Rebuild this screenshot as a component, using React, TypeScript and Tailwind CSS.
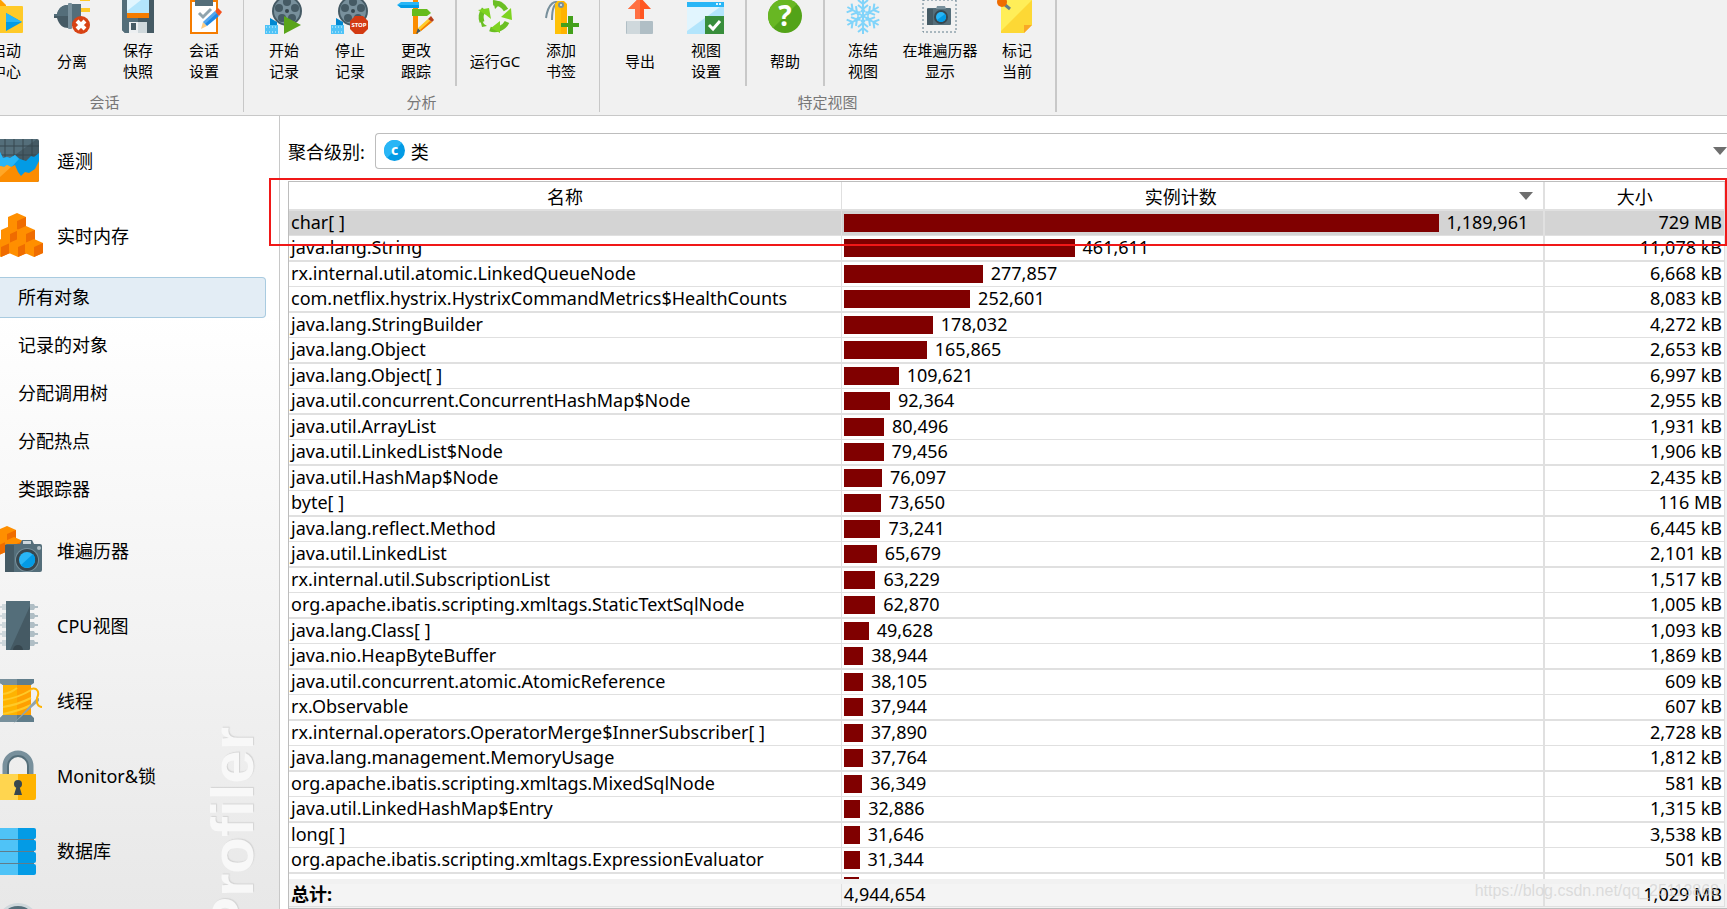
import type { ReactNode } from "react";

type ToolItem = { lines: string[]; icon: ReactNode; wide?: boolean };

/* ================= TOOLBAR ICONS ================= */

const Reel = () => (
  <>
    <circle cx="36" cy="11" r="15" fill="#455a64" />
    <circle cx="36" cy="11" r="13" fill="#78909c" />
    <g fill="#455a64">
      <circle cx="36" cy="2" r="4" />
      <circle cx="28" cy="8" r="4" />
      <circle cx="44" cy="8" r="4" />
      <circle cx="31" cy="18" r="4" />
      <circle cx="41" cy="18" r="4" />
    </g>
    <circle cx="36" cy="11" r="2" fill="#37474f" />
    <path d="M19 18l7 4v5h-7z" fill="#0288d1" />
    <path d="M14 25h13v9H14z" fill="#4fc3f7" />
    <path d="M15 27h11M15 32h11" stroke="#e1f5fe" strokeDasharray="1 2" />
  </>
);

const Pencil = ({ color }: { color: string }) => (
  <>
    <path d="M30 29l2-7 4 4z" fill="#ffcc80" />
    <path d="M32 22L44 11l4 5-12 10z" fill={color} />
    <path d="M32 22L44 11l2 2-12 11z" fill="#fff" opacity=".25" />
    <path d="M44 11l3-3 4 4-3 4z" fill="#f4511e" />
  </>
);

const icons = {
  start: (
    <>
      <path d="M10 0h18l5 5v6H10z" fill="#ffa000" />
      <rect x="8" y="6" width="42" height="27" rx="1" fill="#ffca28" />
      <path d="M33 13v18l16-9z" fill="#039be5" />
      <path d="M33 13v9h16z" fill="#29b6f6" />
    </>
  ),
  detach: (
    <>
      <path d="M41 0h10v1H41zM41 8h10v4H41z" fill="#ffca28" />
      <path d="M15 14h3c2-7 6-9 11-9v23c-5 0-9-3-11-10h-3z" fill="#455a64" />
      <path d="M15 14h3c2-7 6-9 11-9v11H15z" fill="#546e7a" />
      <rect x="33" y="4" width="9" height="22" fill="#546e7a" />
      <rect x="29" y="3" width="4" height="26" rx="1" fill="#78909c" />
      <circle cx="42" cy="25" r="9" fill="#d84315" />
      <path d="M38 21l8 8M46 21l-8 8" stroke="#fff" strokeWidth="4" />
    </>
  ),
  save: (
    <>
      <path d="M17 0h32v33H20l-3-3z" fill="#455a64" />
      <path d="M17 0h16v33H20l-3-3z" fill="#546e7a" />
      <path d="M22 0h22v13H22z" fill="#b3e5fc" />
      <path d="M22 0h14L22 11z" fill="#e1f5fe" />
      <path d="M22 13h22v5H22z" fill="#f57c00" />
      <path d="M24 22h18v11H24z" fill="#cfd8dc" />
      <path d="M24 22h9v11h-9z" fill="#eceff1" />
      <path d="M26 23h5v7h-5z" fill="#455a64" />
    </>
  ),
  session: (
    <>
      <path d="M20 1h26v32H20z" fill="#fff" stroke="#f57c00" strokeWidth="2" />
      <path d="M24 0h18v6H24z" fill="#546e7a" />
      <path d="M28 13l4 4 8-8" fill="none" stroke="#90a4ae" strokeWidth="3" />
      <Pencil color="#1e88e5" />
    </>
  ),
  record: (
    <>
      <Reel />
      <path d="M33 16v18l17-9z" fill="#5aa51a" />
    </>
  ),
  stop: (
    <>
      <Reel />
      <path d="M38 16h8l5 5v8l-5 5h-8l-5-5v-8z" fill="#d33a12" />
      <text x="42" y="27" textAnchor="middle" fontSize="6" fontWeight="700" fill="#fff">
        STOP
      </text>
    </>
  ),
  signpost: (
    <>
      <path d="M30 0h5v34h-5z" fill="#fb8c00" />
      <path d="M18 2h18v6H18l-4-3z" fill="#29b6f6" />
      <path d="M15 5h21v3H18z" fill="#039be5" />
      <path d="M29 9h15l4 4-4 3H29z" fill="#66bb1e" />
      <path d="M33 34l2-6 3 3z" fill="#455a64" />
      <path d="M35 28l10-9 4 3-11 9z" fill="#ffca28" />
      <path d="M38 31l11-9-2-1-10 9z" fill="#f57c00" />
      <path d="M45 19l3-3 3 4-2 2z" fill="#b8401c" />
    </>
  ),
  gc: (
    <>
      <g fill="none" stroke="#6abf23" strokeWidth="5">
        <path d="M20 22a14 14 0 0 1 2-13" />
        <path d="M31 3a14 14 0 0 1 13 7" />
        <path d="M45 22a14 14 0 0 1-17 7" />
      </g>
      <path d="M16 10l11-2 2 11-5-4zM49 8l1 12-11-3zM38 21v12l-9-5z" fill="#7ed321" />
      <path d="M31 0l9 2-7 7zM17 15l5 9 3 2-5 1z" fill="#6abf23" />
    </>
  ),
  bookmark: (
    <>
      <g fill="none" stroke="#78909c" strokeWidth="2">
        <path d="M33 5C27-2 20 4 18 18" />
        <path d="M33 4c-7-4-9 6-9 16" />
      </g>
      <path d="M27 4l3-3h6l3 3v30H27z" fill="#ffb300" />
      <path d="M27 4l3-3h3v33h-6z" fill="#ffc107" />
      <circle cx="33" cy="5" r="3" fill="#78909c" />
      <circle cx="33" cy="5" r="1" fill="#eceff1" />
      <path d="M40 16h5v7h6v4h-6v7h-5v-7h-7v-4h7z" fill="#43a01b" />
    </>
  ),
  exportIcon: (
    <>
      <path d="M33-3l11 12h-7v10h-9V9h-7z" fill="#ff5722" />
      <path d="M33-3v22h-5V9h-7z" fill="#ff7043" />
      <rect x="19" y="21" width="27" height="13" rx="1" fill="#b0bec5" />
      <path d="M20 21h13v13H20z" fill="#cfd8dc" />
    </>
  ),
  viewSettings: (
    <>
      <path d="M14 2h37v32H14z" fill="#b3e5fc" />
      <path d="M14 7h33L14 31z" fill="#e1f5fe" />
      <path d="M14 2h37v5H14z" fill="#29b6f6" />
      <path d="M43 3h2v2h-2zM46 3h2v2h-2z" fill="#e1f5fe" />
      <path d="M32 16h19v18H32z" fill="#388e3c" />
      <path d="M36 25l4 4 7-8" fill="none" stroke="#fff" strokeWidth="3" />
    </>
  ),
  help: (
    <>
      <circle cx="33" cy="16" r="17" fill="#53a318" />
      <path d="M16 16A17 17 0 0 1 45 4L21 28A17 17 0 0 1 16 16z" fill="#68b723" />
      <text x="33" y="26" textAnchor="middle" fontSize="28" fontWeight="700" fill="#fff">
        ?
      </text>
    </>
  ),
  freeze: (
    <g fill="none" stroke="#81d4fa" strokeWidth="2">
      {[0, 60, 120, 180, 240, 300].map((a) => (
        <g key={a} transform={`rotate(${a} 33 16)`}>
          <path d="M33 16V-2M33 4l-5-4M33 4l5-4M33 9l-5-4M33 9l5-4M31 12l2-3 2 3" />
        </g>
      ))}
    </g>
  ),
  heapShow: (
    <>
      <path d="M27-1v33h33V-1M27 0h33" fill="none" stroke="#607d8b" strokeDasharray="2 2" />
      <rect x="31" y="8" width="24" height="17" rx="1" fill="#546e7a" />
      <path d="M31 9h6v16h-6z" fill="#455a64" />
      <path d="M40 9l1-3h8l1 3z" fill="#78909c" />
      <circle cx="45" cy="17" r="7" fill="#37474f" />
      <circle cx="45" cy="17" r="5" fill="#29b6f6" />
      <path d="M41 20a5 5 0 0 0 8-6z" fill="#039be5" />
    </>
  ),
  mark: (
    <>
      <path d="M17 0h31v25l-8 8H17z" fill="#fdd835" />
      <path d="M17 0h31L17 31z" fill="#ffee58" />
      <path d="M40 33v-8h8z" fill="#f9a825" />
      <path d="M20 4l6 5" stroke="#607d8b" strokeWidth="3" />
      <circle cx="18" cy="2" r="5" fill="#ef6c00" />
    </>
  ),
};

/* ================= SIDEBAR ICONS ================= */

const Cube = ({ x, y }: { x: number; y: number }) => (
  <g transform={`translate(${x} ${y})`}>
    <path d="M0 0l9 4v10l-9 4-9-4V4z" fill="#ff8f00" />
    <path d="M0 8l9-4v10l-9 4z" fill="#ef6c00" />
  </g>
);

const sideIcons = {
  telemetry: (
    <>
      <rect x="-4" y="16" width="43" height="43" rx="2" fill="#455a64" />
      <path d="M-4 16h41L4 40h-8z" fill="#546e7a" />
      <path d="M5 16v28M14 16v28M23 16v28M32 16v28M0 23h39M0 32h39" stroke="#37474f" />
      <path d="M0 29l3 6 4-1 3 1 5-3 5 4 6 2 5-5 3 1 5-4v26H0z" fill="#039be5" />
      <path d="M0 29l3 6 4-1 3 1 5-3 4 4L6 50H0z" fill="#29b6f6" />
      <path d="M0 43l4 1 3-2 4 2 4-2 3 7 3 4 4-4 4 1 6-4 4-8v19q0 2-2 2H0z" fill="#fb8c00" />
      <path d="M0 43l4 1 3-2 4 2L0 54z" fill="#ffa726" />
    </>
  ),
  memory: (
    <>
      <Cube x={17} y={15} />
      <Cube x={10} y={28} />
      <Cube x={26} y={28} />
      <Cube x={1} y={41} />
      <Cube x={18} y={41} />
      <Cube x={34} y={41} />
    </>
  ),
  heap: (
    <>
      <Cube x={7} y={13} />
      <Cube x={-1} y={24} />
      <Cube x={14} y={24} />
      <path d="M20 31l2-4h10l2 4z" fill="#546e7a" />
      <path d="M23 28h8v3h-8z" fill="#cfd8dc" />
      <rect x="5" y="31" width="37" height="28" rx="2" fill="#546e7a" />
      <path d="M5 32h9v27H5z" fill="#455a64" />
      <circle cx="39" cy="35" r="2" fill="#b0bec5" />
      <circle cx="27" cy="47" r="12" fill="#78909c" />
      <circle cx="27" cy="47" r="11" fill="#37474f" />
      <circle cx="27" cy="47" r="8" fill="#29b6f6" />
      <path d="M21 52L33 41a8 8 0 0 1-12 11z" fill="#039be5" />
    </>
  ),
  cpu: (
    <>
      {[19, 28, 37, 46, 55].map((y) => (
        <g key={y}>
          <path d={`M0 ${y - 1}h2v-2h5v6H2v-2H0z`} fill="#cfd8dc" />
          <path d={`M29 ${y - 3}h5l1 2h3v2h-3l-1 2h-5z`} fill="#b0bec5" />
        </g>
      ))}
      <rect x="6" y="13" width="24" height="49" rx="1" fill="#455a64" />
      <path d="M6 13h24v5L10 62H6z" fill="#546e7a" />
      <path d="M13 62a5 5 0 0 1 10 0z" fill="#37474f" />
    </>
  ),
  thread: (
    <>
      <path d="M3 22h28v31H3z" fill="#ffa000" />
      <path d="M3 22h14v31H3z" fill="#ffb300" />
      <path d="M3 31q8-1 14-6M3 37q15-2 28-10M3 44q14-2 28-9M3 51q16-3 28-9" fill="none" stroke="#ffca28" strokeWidth="2" />
      <path d="M0 16h34v4l-3 2H3l-3-2zM0 55l3-3h28l3 3v4H0z" fill="#607d8b" />
      <path d="M0 16h17v6H3l-3-2zM0 55l3-3h14v7H0z" fill="#78909c" />
      <path d="M13 61L36 36l3-1v3z" fill="#90a4ae" />
      <path d="M31 26c6-2 9 3 6 9-1 5 1 9 5 9" fill="none" stroke="#ffb300" strokeWidth="2" />
    </>
  ),
  lock: (
    <>
      <path d="M5 37V28a13 13 0 0 1 26 0v9" fill="none" stroke="#78909c" strokeWidth="5" />
      <path d="M8 37V28a10 10 0 0 1 20 0v9" fill="none" stroke="#546e7a" strokeWidth="2" />
      <path d="M0 36h36v24q0 2-2 2H0z" fill="#ffb300" />
      <path d="M0 36h18v26H0z" fill="#ffd54f" />
      <circle cx="18" cy="46" r="4" fill="#37474f" />
      <path d="M17 47h2l3 10h-8z" fill="#37474f" />
    </>
  ),
  database: (
    <>
      <path d="M0 24h34v30H0z" fill="#607d8b" />
      {[15, 27, 39, 51].map((y) => (
        <g key={y}>
          <rect x="-4" y={y} width="40" height="11" rx="2" fill="#039be5" />
          <path d={`M0 ${y}h18v11H0z`} fill="#4fc3f7" />
        </g>
      ))}
    </>
  ),
  gauge: (
    <>
      <circle cx="18" cy="36" r="21" fill="#cfd8dc" />
      <circle cx="18" cy="36" r="18" fill="#546e7a" />
    </>
  ),
};

/* ================= DATA ================= */

const toolGroups: { title: string; sections: ToolItem[][] }[] = [
  {
    title: "会话",
    sections: [
      [
        { lines: ["启动", "中心"], icon: icons.start },
        { lines: ["分离"], icon: icons.detach },
        { lines: ["保存", "快照"], icon: icons.save },
        { lines: ["会话", "设置"], icon: icons.session },
      ],
    ],
  },
  {
    title: "分析",
    sections: [
      [
        { lines: ["开始", "记录"], icon: icons.record },
        { lines: ["停止", "记录"], icon: icons.stop },
        { lines: ["更改", "跟踪"], icon: icons.signpost },
      ],
      [
        { lines: ["运行GC"], icon: icons.gc },
        { lines: ["添加", "书签"], icon: icons.bookmark },
      ],
    ],
  },
  {
    title: "特定视图",
    sections: [
      [
        { lines: ["导出"], icon: icons.exportIcon },
        { lines: ["视图", "设置"], icon: icons.viewSettings },
      ],
      [{ lines: ["帮助"], icon: icons.help }],
      [
        { lines: ["冻结", "视图"], icon: icons.freeze },
        { lines: ["在堆遍历器", "显示"], icon: icons.heapShow, wide: true },
        { lines: ["标记", "当前"], icon: icons.mark },
      ],
    ],
  },
];

const memoryViews = ["所有对象", "记录的对象", "分配调用树", "分配热点", "类跟踪器"];

const rows: [string, number, string][] = [
  ["char[ ]", 1189961, "729 MB"],
  ["java.lang.String", 461611, "11,078 kB"],
  ["rx.internal.util.atomic.LinkedQueueNode", 277857, "6,668 kB"],
  ["com.netflix.hystrix.HystrixCommandMetrics$HealthCounts", 252601, "8,083 kB"],
  ["java.lang.StringBuilder", 178032, "4,272 kB"],
  ["java.lang.Object", 165865, "2,653 kB"],
  ["java.lang.Object[ ]", 109621, "6,997 kB"],
  ["java.util.concurrent.ConcurrentHashMap$Node", 92364, "2,955 kB"],
  ["java.util.ArrayList", 80496, "1,931 kB"],
  ["java.util.LinkedList$Node", 79456, "1,906 kB"],
  ["java.util.HashMap$Node", 76097, "2,435 kB"],
  ["byte[ ]", 73650, "116 MB"],
  ["java.lang.reflect.Method", 73241, "6,445 kB"],
  ["java.util.LinkedList", 65679, "2,101 kB"],
  ["rx.internal.util.SubscriptionList", 63229, "1,517 kB"],
  ["org.apache.ibatis.scripting.xmltags.StaticTextSqlNode", 62870, "1,005 kB"],
  ["java.lang.Class[ ]", 49628, "1,093 kB"],
  ["java.nio.HeapByteBuffer", 38944, "1,869 kB"],
  ["java.util.concurrent.atomic.AtomicReference", 38105, "609 kB"],
  ["rx.Observable", 37944, "607 kB"],
  ["rx.internal.operators.OperatorMerge$InnerSubscriber[ ]", 37890, "2,728 kB"],
  ["java.lang.management.MemoryUsage", 37764, "1,812 kB"],
  ["org.apache.ibatis.scripting.xmltags.MixedSqlNode", 36349, "581 kB"],
  ["java.util.LinkedHashMap$Entry", 32886, "1,315 kB"],
  ["long[ ]", 31646, "3,538 kB"],
  ["org.apache.ibatis.scripting.xmltags.ExpressionEvaluator", 31344, "501 kB"],
];

const maxCount = rows[0][1];
const barWidth = (count: number) => `${(count / maxCount) * 85}%`;

/* ================= PARTS ================= */

function ToolButton({ lines, icon, wide }: ToolItem) {
  return (
    <button className={`flex flex-col items-center ${wide ? "w-[88px]" : "w-[66px]"}`}>
      <svg viewBox={wide ? "0 0 88 36" : "0 0 66 36"} className="h-9 w-full" aria-hidden="true">
        {icon}
      </svg>
      <span className="mt-1 flex h-[42px] flex-col justify-center text-[15px] leading-[21px] whitespace-nowrap">
        {lines.map((line) => (
          <span key={line}>{line}</span>
        ))}
      </span>
    </button>
  );
}

function Toolbar() {
  return (
    <header className="flex shrink-0 overflow-hidden border-b border-[#c8c8c8] bg-[#f1f1f1]">
      {toolGroups.map((group, g) => (
        <section
          key={group.title}
          className={`mb-[3px] flex shrink-0 flex-col border-[#c8c8c8] ${g === 0 ? "-ml-[34px]" : ""} ${
            g === 2 ? "border-r-2" : "border-r"
          }`}
        >
          <div className="flex h-[86px]">
            {group.sections.map((section, s) => (
              <div
                key={s}
                className={`flex border-[#c8c8c8] ${s === 0 ? "pr-1.5 pl-[7px]" : "pr-[5px] pl-[5px]"} ${
                  s < group.sections.length - 1 ? "border-r-2" : ""
                }`}
              >
                {section.map((item) => (
                  <ToolButton key={item.lines.join("")} {...item} />
                ))}
              </div>
            ))}
          </div>
          <h2 className="mt-1.5 text-center text-[15px] leading-5 text-[#777]">{group.title}</h2>
        </section>
      ))}
    </header>
  );
}

function SideItem({ icon, label }: { icon: ReactNode; label: string }) {
  return (
    <li>
      <a href="#" className="flex h-[75px] items-center gap-[13px]">
        <svg viewBox="0 0 44 75" className="h-[75px] w-11 shrink-0" aria-hidden="true">
          {icon}
        </svg>
        {label}
      </a>
    </li>
  );
}

function Sidebar() {
  return (
    <aside className="relative w-[280px] shrink-0 overflow-hidden border-r border-[#c8c8c8] bg-linear-to-b from-white from-25% to-[#e8e8e8] pt-[7px]">
      <div className="absolute top-[611px] right-4 rotate-180 font-['Liberation_Sans',sans-serif] text-[60px] leading-[60px] font-bold text-[#f8f8f8] [text-shadow:1px_1px_1px_#d4d4d4] [writing-mode:vertical-rl]">
        JProfiler
      </div>
      <nav className="relative text-lg">
        <ul>
          <SideItem icon={sideIcons.telemetry} label="遥测" />
          <SideItem icon={sideIcons.memory} label="实时内存" />
          {memoryViews.map((view, i) => (
            <li key={view} className="flex h-12 items-center pr-[13px]">
              <a
                href="#"
                className={`h-[41px] w-full rounded-r-sm border border-l-0 pl-[18px] leading-[39px] ${
                  i === 0 ? "border-[#a9cbe0] bg-[#e3edf5]" : "border-transparent"
                }`}
              >
                {view}
              </a>
            </li>
          ))}
          <SideItem icon={sideIcons.heap} label="堆遍历器" />
          <SideItem icon={sideIcons.cpu} label="CPU视图" />
          <SideItem icon={sideIcons.thread} label="线程" />
          <SideItem icon={sideIcons.lock} label="Monitor&锁" />
          <SideItem icon={sideIcons.database} label="数据库" />
          <SideItem icon={sideIcons.gauge} label="" />
        </ul>
      </nav>
    </aside>
  );
}

function Columns() {
  return (
    <colgroup>
      <col className="w-[38.5%]" />
      <col className="w-[49%]" />
      <col />
    </colgroup>
  );
}

function ObjectTable() {
  return (
    <div className="relative flex min-h-0 flex-1 flex-col border-t border-l border-[#bdbdbd] bg-[#f1f1f1] pr-0.5">
      <div className="min-h-0 flex-1 overflow-hidden">
        <table className="w-full table-fixed border-separate border-spacing-0 bg-white">
          <Columns />
          <thead>
            <tr className="text-lg leading-[23px]">
              <th className="border-r border-b-2 border-[#e0e0e0] p-0 pt-1 font-normal">名称</th>
              <th className="border-r-2 border-b-2 border-[#e0e0e0] p-0 pt-1 font-normal">
                <span className="flex items-center pr-2.5">
                  <span className="flex-1">实例计数</span>
                  <svg viewBox="0 0 14 8" className="mb-1 h-2 w-3.5" aria-hidden="true">
                    <path d="M0 0h14L7 8z" fill="#6e6e6e" />
                  </svg>
                </span>
              </th>
              <th className="border-r border-b-2 border-[#e0e0e0] p-0 pt-1 font-normal">大小</th>
            </tr>
          </thead>
          <tbody className="text-lg leading-[22px]">
            {rows.map(([name, count, size], i) => (
              <tr
                key={name}
                className={`*:border-[#e0e0e0] *:p-0 ${i % 2 ? "*:border-b-2" : "*:border-b"} ${
                  i === 0 ? "bg-[#d4d4d4]" : ""
                }`}
              >
                <td className="border-r">
                  <div className="h-6 pl-0.5 whitespace-nowrap">{name}</div>
                </td>
                <td className="border-r-2">
                  <div className="flex h-6 items-center gap-2 pl-0.5">
                    <div className="h-[18px] bg-[#800000]" style={{ width: barWidth(count) }} />
                    <span className="h-6">{count.toLocaleString("en-US")}</span>
                  </div>
                </td>
                <td className="border-r">
                  <div className="h-6 pr-0.5 text-right whitespace-nowrap">{size}</div>
                </td>
              </tr>
            ))}
            <tr className="*:border-[#e0e0e0] *:p-0">
              <td className="border-r" />
              <td className="border-r-2">
                <div className="flex h-6 items-center pl-0.5">
                  <div className="h-[18px] bg-[#800000]" style={{ width: barWidth(31000) }} />
                </div>
              </td>
              <td className="border-r" />
            </tr>
          </tbody>
        </table>
      </div>
      <table className="mt-[5px] mb-px w-full table-fixed border-separate border-spacing-0 border-b border-[#e0e0e0] bg-[#f4f4f4] text-lg leading-5">
        <Columns />
        <tbody>
          <tr className="*:border-[#e0e0e0] *:p-0">
            <th className="border-r text-left font-bold">
              <div className="h-[22px] pl-0.5">总计:</div>
            </th>
            <td className="border-r-2">
              <div className="h-[22px] pl-0.5">4,944,654</div>
            </td>
            <td className="border-r">
              <div className="h-[22px] pr-0.5 text-right">1,029 MB</div>
            </td>
          </tr>
        </tbody>
      </table>
      {/* highlight frame around the header and the first row */}
      <div className="pointer-events-none absolute -top-1 right-0 -left-5 h-[68px] border-2 border-[#f01818]" />
    </div>
  );
}

export default function App() {
  return (
    <div className="relative flex h-screen flex-col overflow-hidden bg-white font-['Noto_Sans','Noto_Sans_CJK_SC',sans-serif] text-black">
      <Toolbar />
      <div className="flex min-h-0 flex-1">
        <Sidebar />
        <main className="flex min-w-0 flex-1 flex-col pt-[17px] pl-2">
          <div className="mb-3 flex items-center gap-2.5 text-lg">
            <label htmlFor="level" className="pt-0.5 whitespace-nowrap">
              聚合级别:
            </label>
            <div className="relative flex-1">
              <svg viewBox="0 0 21 21" className="absolute top-[7px] left-[9px] h-[21px] w-[21px]" aria-hidden="true">
                <circle cx="10.5" cy="10.5" r="10.5" fill="#039be5" />
                <path d="M3 18A10.5 10.5 0 0 1 18 3z" fill="#29b6f6" />
                <text x="10.5" y="15" textAnchor="middle" fontSize="14" fontWeight="700" fill="#fff">
                  c
                </text>
              </svg>
              <select
                id="level"
                className="block h-9 w-full appearance-none rounded-l-sm border border-r-0 border-[#bdbdbd] pt-0.5 pl-[35px] text-lg leading-8"
              >
                <option>类</option>
              </select>
              <svg viewBox="0 0 14 8" className="absolute top-3.5 right-0 h-2 w-3.5" aria-hidden="true">
                <path d="M0 0h14L7 8z" fill="#6e6e6e" />
              </svg>
            </div>
          </div>
          <ObjectTable />
          <div className="h-px bg-[#bdbdbd]" />
        </main>
      </div>
      <div className="pointer-events-none absolute right-2 bottom-1.5 font-['Liberation_Sans',sans-serif] text-base text-[#d0d0d0]/70">
        https://blog.csdn.net/qq_25113868
      </div>
    </div>
  );
}
